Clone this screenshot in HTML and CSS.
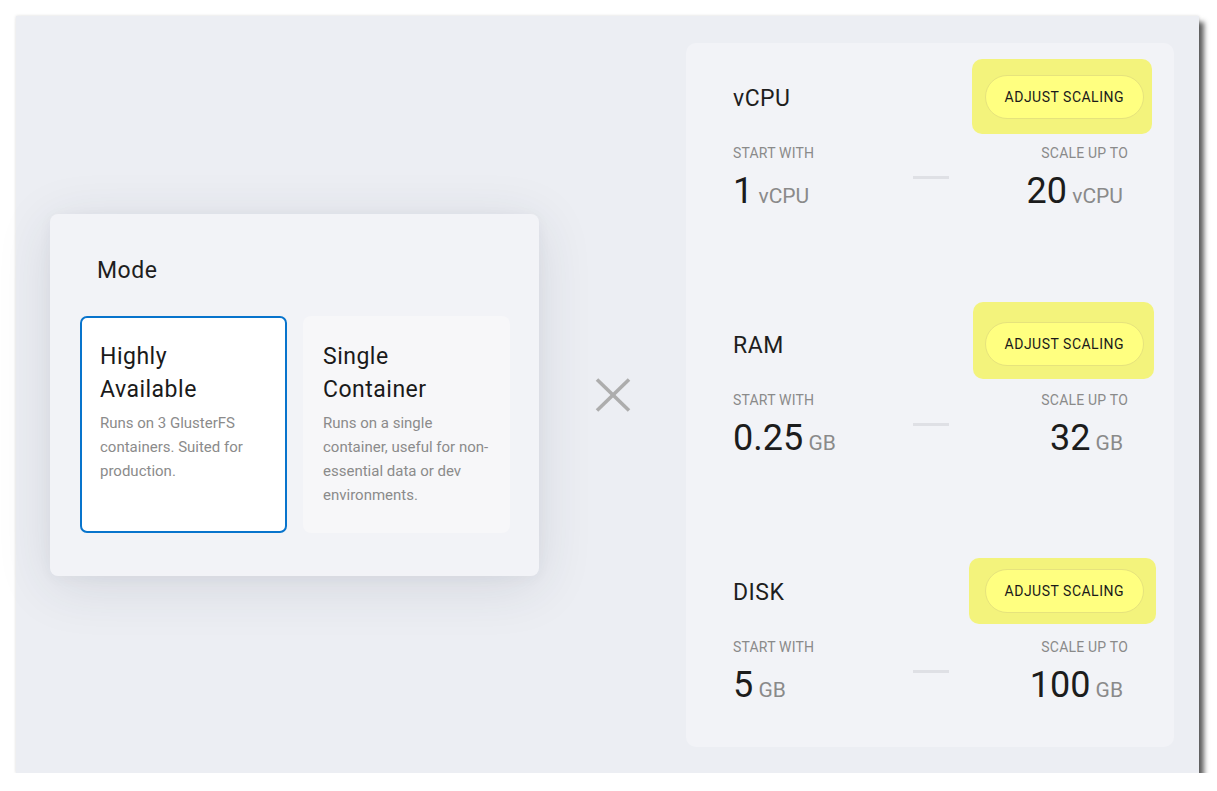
FILE: index.html
```html
<!DOCTYPE html>
<html lang="en">
<head>
<meta charset="utf-8">
<title>Storage scaling</title>
<link rel="stylesheet" href="styles.css">
</head>
<body>
<div class="page">
  <div class="frame">
    <section class="mode-card">
      <h2 class="mode-title">Mode</h2>
      <div class="options">
        <div class="option option--selected">
          <h3 class="option-title">Highly Available</h3>
          <p class="option-desc">Runs on 3 GlusterFS containers. Suited for production.</p>
        </div>
        <div class="option">
          <h3 class="option-title">Single Container</h3>
          <p class="option-desc">Runs on a single container, useful for non-essential data or dev environments.</p>
        </div>
      </div>
    </section>

    <div class="times">
      <svg class="times-icon" width="36" height="34" viewBox="0 0 36 34" aria-hidden="true">
        <line x1="2" y1="1.5" x2="34" y2="32.5"></line>
        <line x1="34" y1="1.5" x2="2" y2="32.5"></line>
      </svg>
    </div>

    <section class="resources">
      <div class="resource">
        <div class="resource-head">
          <h3 class="resource-name">vCPU</h3>
          <span class="marker marker--a"><button class="adjust">ADJUST SCALING</button></span>
        </div>
        <div class="stats">
          <div class="stat">
            <div class="stat-label">START WITH</div>
            <div class="stat-value"><span class="num">1</span> <span class="unit">vCPU</span></div>
          </div>
          <div class="dash"></div>
          <div class="stat stat--end">
            <div class="stat-label">SCALE UP TO</div>
            <div class="stat-value"><span class="num">20</span> <span class="unit">vCPU</span></div>
          </div>
        </div>
      </div>

      <div class="resource">
        <div class="resource-head">
          <h3 class="resource-name">RAM</h3>
          <span class="marker marker--b"><button class="adjust">ADJUST SCALING</button></span>
        </div>
        <div class="stats">
          <div class="stat">
            <div class="stat-label">START WITH</div>
            <div class="stat-value"><span class="num">0.25</span> <span class="unit">GB</span></div>
          </div>
          <div class="dash"></div>
          <div class="stat stat--end">
            <div class="stat-label">SCALE UP TO</div>
            <div class="stat-value"><span class="num">32</span> <span class="unit">GB</span></div>
          </div>
        </div>
      </div>

      <div class="resource">
        <div class="resource-head">
          <h3 class="resource-name">DISK</h3>
          <span class="marker marker--c"><button class="adjust">ADJUST SCALING</button></span>
        </div>
        <div class="stats">
          <div class="stat">
            <div class="stat-label">START WITH</div>
            <div class="stat-value"><span class="num">5</span> <span class="unit">GB</span></div>
          </div>
          <div class="dash"></div>
          <div class="stat stat--end">
            <div class="stat-label">SCALE UP TO</div>
            <div class="stat-value"><span class="num">100</span> <span class="unit">GB</span></div>
          </div>
        </div>
      </div>
    </section>
  </div>
</div>
</body>
</html>
```

FILE: styles.css
```css
* {
  box-sizing: border-box;
}

html, body {
  margin: 0;
  padding: 0;
  background: #ffffff;
}

body {
  font-family: Roboto, "Liberation Sans", Arial, sans-serif;
  color: #1e1e1e;
}

.page {
  padding: 16px 0 0 16px;
}

.frame {
  width: 1183px;
  height: 757px;
  background: #eceef3;
  display: flex;
  align-items: center;
  padding: 0 25px 0 34px;
  box-shadow: 0 0 3px rgba(0, 0, 0, 0.14), 5px 6px 5px rgba(0, 0, 0, 0.62);
}

/* ---------- Mode card ---------- */
.mode-card {
  width: 489px;
  flex: none;
  background: #f2f3f7;
  border-radius: 8px;
  padding: 40px 29px 43px 30px;
  box-shadow: 0 10px 55px rgba(40, 50, 70, 0.12), 0 2px 14px rgba(40, 50, 70, 0.04);
}

.mode-title {
  margin: 0 0 29px 17px;
  font-size: 23px;
  font-weight: 400;
  letter-spacing: 0.5px;
  line-height: 33px;
  color: #1e1e1e;
}

.options {
  display: grid;
  grid-template-columns: 1fr 1fr;
  gap: 16px;
}

.option {
  border: 2px solid transparent;
  border-radius: 8px;
  background: #f7f7f9;
  padding: 22px 18px 24px 18px;
}

.option--selected {
  background: #ffffff;
  border-color: #0874cc;
  border-radius: 7px;
}

.option-title {
  margin: 0;
  font-size: 23px;
  font-weight: 400;
  letter-spacing: 0.5px;
  line-height: 33px;
  color: #1a1a1a;
}

.option-desc {
  margin: 5px 0 0 0;
  font-size: 15px;
  line-height: 24px;
  color: #8b8b8b;
}

/* ---------- Times ---------- */
.times {
  flex: 1;
  display: flex;
  justify-content: center;
  align-items: center;
}

.times-icon line {
  stroke: #adadad;
  stroke-width: 3.6;
  stroke-linecap: butt;
}

/* ---------- Resources panel ---------- */
.resources {
  width: 488px;
  flex: none;
  background: #f2f3f7;
  border-radius: 10px;
  padding: 32px 30px 35px 47px;
  display: flex;
  flex-direction: column;
  gap: 104px;
}

.resource-head {
  display: flex;
  justify-content: space-between;
  align-items: center;
  height: 44px;
}

.resource-name {
  margin: 4px 0 0 0;
  font-size: 23px;
  font-weight: 400;
  letter-spacing: 0.5px;
  line-height: 23px;
  color: #1e1e1e;
}

.marker {
  position: relative;
  z-index: 0;
  display: inline-flex;
}

.marker::before {
  content: "";
  position: absolute;
  z-index: -1;
  background: #f3f37c;
  border-radius: 10px;
}

.marker--a::before {
  top: -16px;
  bottom: -15px;
  left: -13px;
  right: -8px;
}

.marker--b::before {
  top: -20px;
  bottom: -13px;
  left: -12px;
  right: -10px;
}

.marker--c::before {
  top: -11px;
  bottom: -11px;
  left: -16px;
  right: -12px;
}

.adjust {
  height: 44px;
  padding: 0 19px;
  border: 1px solid #e6e37c;
  border-radius: 22px;
  background: #ffff80;
  font-family: Roboto, "Liberation Sans", Arial, sans-serif;
  font-size: 14px;
  font-weight: 400;
  letter-spacing: 0.5px;
  color: #1a1a1a;
  cursor: pointer;
}

.stats {
  margin: 24px 16px 0 0;
  display: grid;
  grid-template-columns: 1fr 36px 1fr;
}

.stat-label {
  font-size: 14px;
  line-height: 20px;
  letter-spacing: 0.2px;
  color: #8a8a8a;
}

.stat-value {
  margin-top: 7px;
  font-size: 21px;
  line-height: 43px;
  white-space: nowrap;
}

.num {
  font-size: 36px;
  color: #1c1c1c;
}

.unit {
  font-size: 21px;
  color: #8a8a8a;
}

.stat--end {
  text-align: right;
}

.stat--end .stat-value {
  padding-right: 5px;
}

.dash {
  align-self: start;
  margin-top: 33px;
  height: 3px;
  background: #dfe0e5;
}
```
